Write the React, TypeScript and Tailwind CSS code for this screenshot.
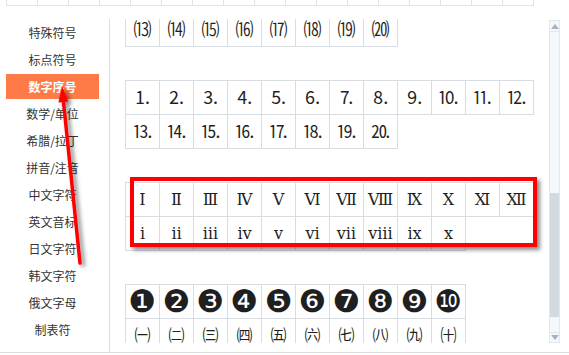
import React from 'react';

const menu = ['特殊符号', '标点符号', '数字序号', '数学/单位', '希腊/拉丁', '拼音/注音', '中文字符', '英文音标', '日文字符', '韩文字符', '俄文字母', '制表符'];

const parenTable = [['⒀', '⒁', '⒂', '⒃', '⒄', '⒅', '⒆', '⒇']];
const dotTable = [
  ['⒈', '⒉', '⒊', '⒋', '⒌', '⒍', '⒎', '⒏', '⒐', '⒑', '⒒', '⒓'],
  ['⒔', '⒕', '⒖', '⒗', '⒘', '⒙', '⒚', '⒛'],
];
const romanTable = [
  ['Ⅰ', 'Ⅱ', 'Ⅲ', 'Ⅳ', 'Ⅴ', 'Ⅵ', 'Ⅶ', 'Ⅷ', 'Ⅸ', 'Ⅹ', 'Ⅺ', 'Ⅻ'],
  ['ⅰ', 'ⅱ', 'ⅲ', 'ⅳ', 'ⅴ', 'ⅵ', 'ⅶ', 'ⅷ', 'ⅸ', 'ⅹ'],
];
const circleTable = [
  ['❶', '❷', '❸', '❹', '❺', '❻', '❼', '❽', '❾', '❿'],
  ['㈠', '㈡', '㈢', '㈣', '㈤', '㈥', '㈦', '㈧', '㈨', '㈩'],
];

const SymbolTable: React.FC<{ rows: string[][]; rowClass?: string[] }> = ({ rows, rowClass = [] }) => (
  <div className="flex w-fit flex-col border-l border-t border-[#d8dde4]">
    {rows.map((row, i) => (
      <div key={i} className="flex">
        {row.map((c) => (
          <div key={c} className={`flex h-[34px] w-[34px] items-center justify-center border-b border-r border-[#d8dde4] text-[#1f1f1f] ${rowClass[i] ?? ''}`}>
            {c}
          </div>
        ))}
      </div>
    ))}
  </div>
);

export default function App() {
  return (
    <div className="relative h-[355px] w-[569px] overflow-hidden bg-white font-['Noto_Sans_CJK_SC',sans-serif]">
      {/* strip of the table above, scrolled out */}
      <div className="ml-[6px] flex w-fit border-l border-[#e1e5ea]">
        {Array.from({ length: 17 }).map((_, i) => (
          <div key={i} className="h-[6px] w-[31px] border-b border-r border-[#e1e5ea]" />
        ))}
      </div>

      <div className="mt-[13px] flex h-[334px] border-b border-[#d9dee4]">
        {/* sidebar */}
        <div className="flex w-[110px] flex-col gap-[2px] border-r border-[#d9dee4] pt-[1px]">
          {menu.map((m) => (
            <div
              key={m}
              className={`ml-[6px] flex h-[25px] w-[93px] items-center justify-center text-[12px] ${m === '数字序号' ? 'bg-[#fe7b48] font-bold text-white' : 'text-[#333]'}`}
            >
              {m}
            </div>
          ))}
        </div>

        {/* symbol list */}
        <div className="h-[324px] flex-1 overflow-hidden">
          <div className="-mt-[7px] flex flex-col gap-[33px] pl-[15px] font-['DejaVu_Serif','Noto_Sans_CJK_SC',serif] text-[16px]">
            <SymbolTable rows={parenTable} rowClass={['text-[18px]']} />
            <SymbolTable rows={dotTable} rowClass={['text-[18px]', 'text-[18px]']} />
            <SymbolTable rows={romanTable} />
            <SymbolTable
              rows={circleTable}
              rowClass={["text-[31px] leading-none font-['DejaVu_Sans','Noto_Sans_CJK_SC',sans-serif]", 'text-[16px] leading-none']}
            />
          </div>
        </div>

        {/* scrollbar */}
        <div className="mr-[9px] mt-[1px] flex h-[323px] w-[11px] flex-col border border-[#e3e8ee] bg-[#f4f7fb]">
          <div className="flex h-[11px] items-center justify-center border-b border-[#e3e8ee]">
            <svg width="8" height="5" viewBox="0 0 8 5"><path d="M4 0L8 5H0z" fill="#a8b2bc" /></svg>
          </div>
          <div className="flex flex-1 flex-col">
            <div className="mt-[161px] h-[124px] bg-[#d3dadf]" />
          </div>
          <div className="flex h-[10px] items-center justify-center border-t border-[#e3e8ee]">
            <svg width="8" height="5" viewBox="0 0 8 5"><path d="M0 0H8L4 5z" fill="#a8b2bc" /></svg>
          </div>
        </div>
      </div>

      {/* red annotation box */}
      <div className="absolute left-[130px] top-[177px] h-[70px] w-[407px] border-[4px] border-[#ff0000] shadow-[3px_3px_4px_rgba(0,0,0,0.45)]" />

      {/* red annotation arrow */}
      <svg className="pointer-events-none absolute left-0 top-0" width="569" height="355" viewBox="0 0 569 355">
        <defs>
          <filter id="sh" x="-50%" y="-50%" width="200%" height="200%">
            <feDropShadow dx="3" dy="2" stdDeviation="2" floodColor="#000" floodOpacity="0.5" />
          </filter>
        </defs>
        <g filter="url(#sh)">
          <line x1="80" y1="263" x2="63.3" y2="100" stroke="#ff0000" strokeWidth="3.5" strokeLinecap="round" />
          <path d="M62 86L68.4 101.5L58.4 102.5z" fill="#ff0000" />
        </g>
      </svg>
    </div>
  );
}
